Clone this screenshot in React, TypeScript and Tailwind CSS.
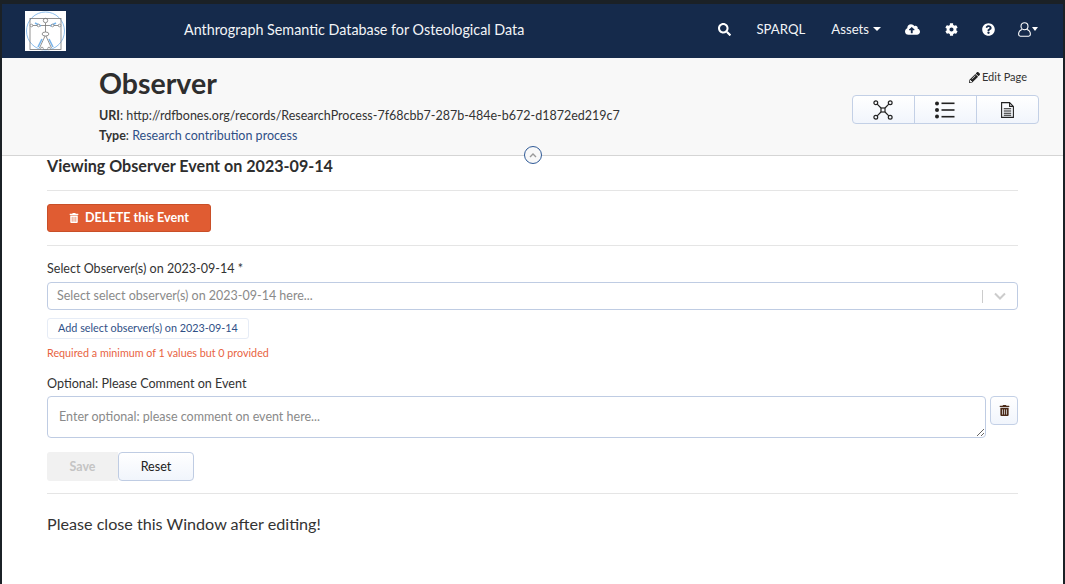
import { FaSearch, FaCloudUploadAlt, FaCog, FaQuestionCircle, FaPencilAlt, FaTrashAlt } from "react-icons/fa";

function Logo() {
  return (
    <div className="w-[41px] h-[40px] bg-white shrink-0">
      <svg viewBox="0 0 41 40" className="w-full h-full" fill="none">
        <circle cx="20.5" cy="20" r="19" stroke="#8fc0ee" strokeWidth="1" />
        <rect x="5" y="7.5" width="31" height="31" stroke="#777" strokeWidth="0.8" />
        <circle cx="20.5" cy="9.5" r="2.2" stroke="#777" strokeWidth="0.8" />
        <path d="M6 14.5h29M20.5 12v12M20.5 24l-6 13M20.5 24l6 13" stroke="#777" strokeWidth="0.8" />
        <path d="M10 12l6 3M31 12l-6 3M13 36l4-8M28 36l-4-8" stroke="#78b4ea" strokeWidth="1.6" />
        <ellipse cx="20.5" cy="23" rx="3.4" ry="2" fill="#fff" stroke="#777" strokeWidth="0.8" />
        <circle cx="6.5" cy="14.5" r="1.3" fill="#fff" stroke="#777" strokeWidth="0.7" />
        <circle cx="13.5" cy="14.5" r="1.3" fill="#fff" stroke="#777" strokeWidth="0.7" />
        <circle cx="27.5" cy="14.5" r="1.3" fill="#fff" stroke="#777" strokeWidth="0.7" />
        <circle cx="34.5" cy="14.5" r="1.3" fill="#fff" stroke="#777" strokeWidth="0.7" />
        <circle cx="17" cy="37.5" r="1.3" fill="#fff" stroke="#777" strokeWidth="0.7" />
        <circle cx="24" cy="37.5" r="1.3" fill="#fff" stroke="#777" strokeWidth="0.7" />
      </svg>
    </div>
  );
}

function GraphIcon() {
  return (
    <svg width="20" height="20" viewBox="0 0 20 20" fill="none" stroke="#222" strokeWidth="1.2">
      <rect x="8" y="8" width="4" height="4" />
      <circle cx="2.8" cy="2.8" r="1.9" />
      <circle cx="17.2" cy="2.8" r="1.9" />
      <circle cx="2.8" cy="17.2" r="1.9" />
      <circle cx="17.2" cy="17.2" r="1.9" />
      <path d="M4.2 4.2L8 8M15.8 4.2L12 8M4.2 15.8L8 12M15.8 15.8L12 12" />
    </svg>
  );
}

function ListIcon() {
  return (
    <svg width="20" height="18" viewBox="0 0 20 18" fill="#222">
      <circle cx="2" cy="2.5" r="2" />
      <circle cx="2" cy="9" r="2" />
      <circle cx="2" cy="15.5" r="2" />
      <rect x="6.5" y="1.5" width="13" height="1.6" />
      <rect x="6.5" y="8.2" width="13" height="1.6" />
      <rect x="6.5" y="14.9" width="13" height="1.6" />
    </svg>
  );
}

function DocIcon() {
  return (
    <svg width="13" height="16" viewBox="0 0 13 16" fill="none" stroke="#222" strokeWidth="1.1">
      <path d="M.6.6h8l3.8 3.8v11H.6zM8.6.6v3.8h3.8" />
      <path d="M2.8 6.8h7.4M2.8 9h7.4M2.8 11.2h7.4M2.8 13.2h7.4" />
    </svg>
  );
}

function UserIcon() {
  return (
    <svg width="13" height="15" viewBox="0 0 13 15" fill="none" stroke="#fff" strokeWidth="1.1">
      <circle cx="6.5" cy="4.2" r="3.5" />
      <path d="M4 7.5C1.8 8.3.6 10 .6 12.3c0 1.2.6 1.9 1.8 1.9h8.2c1.2 0 1.8-.7 1.8-1.9 0-2.3-1.2-4-3.4-4.8" />
    </svg>
  );
}

export default function App() {
  return (
    <div
      className="h-[584px] w-[1065px] overflow-hidden bg-[#1b2126] pt-[4px] pl-[2px] pr-[2px] text-[#333]"
      style={{ fontFamily: "Lato, sans-serif" }}
    >
      <div className="h-full bg-white">
        {/* navbar */}
        <nav className="h-[54px] bg-[#152a4b] flex items-center pl-[23px] text-white">
          <Logo />
          <span className="ml-[118px] mb-[3px] text-[14.33px] text-[#f2f4f7]">
            Anthrograph <span className="[font-feature-settings:'dlig']">Semantic</span> Database for Osteological Data
          </span>
          <div className="ml-auto mb-[3px] flex items-center text-[13.2px] pr-[25px] text-[#f2f4f7]">
            <FaSearch className="text-[13px] text-white" />
            <span className="ml-[25px]">SPARQL</span>
            <span className="ml-[26px] flex items-center gap-[4px]">
              Assets <span className="inline-block border-x-[4px] border-x-transparent border-t-[4px] border-t-white" />
            </span>
            <FaCloudUploadAlt className="ml-[24px] text-[15px] text-white" />
            <FaCog className="ml-[25px] text-[13px] text-white" />
            <FaQuestionCircle className="ml-[24px] text-[13px] text-white" />
            <span className="ml-[23px] flex items-center gap-px">
              <UserIcon />
              <span className="inline-block border-x-[3px] border-x-transparent border-t-[4px] border-t-white" />
            </span>
          </div>
        </nav>

        {/* page header */}
        <header className="relative h-[98px] bg-[#f8f8f8] border-b border-[#d5d5d5] pl-[97px] pr-[24px] flex justify-between">
          <div>
            <h1 className="mt-[6px] text-[28.5px] leading-[38px] font-bold text-[#2e2e2e]">Observer</h1>
            <p className="mt-[4px] text-[12.5px] leading-[20px]">
              <b>URI</b>: http://rdfbones.org/records/ResearchProcess-7f68cbb7-287b-484e-b672-d1872ed219c7
            </p>
            <p className="text-[12.5px] leading-[20px]">
              <b>Type</b>: <span className="text-[#2f4f86]">Research <span className="[font-feature-settings:'dlig']">contribution</span> process</span>
            </p>
          </div>
          <div className="flex flex-col items-end">
            <div className="mt-[11px] mr-[12px] flex items-center gap-[2px] text-[11px] leading-[16px]">
              <FaPencilAlt className="text-[11px] text-[#222]" /> Edit Page
            </div>
            <div className="mt-[10px] flex h-[29px] w-[187px] rounded-[4px] border border-[#c3d0e6] bg-gradient-to-b from-white to-[#f1f5fc]">
              <div className="w-[62px] flex items-center justify-center border-r border-[#c3d0e6] pr-[2px]">
                <GraphIcon />
              </div>
              <div className="w-[62px] flex items-center justify-center border-r border-[#c3d0e6] pr-px">
                <ListIcon />
              </div>
              <div className="flex-1 flex items-center justify-center">
                <DocIcon />
              </div>
            </div>
          </div>
          <div className="absolute left-[522px] top-[88px] w-[18px] h-[18px] rounded-full border border-[#2f5a97] bg-[#f8f8f8] flex items-center justify-center">
            <svg width="8" height="5" viewBox="0 0 8 5" fill="none" stroke="#999" strokeWidth="1.4">
              <path d="M1 4l3-3 3 3" />
            </svg>
          </div>
        </header>

        {/* form */}
        <main className="pl-[45px] pr-[45px]">
          <h2 className="text-[16.1px] leading-[20px] font-bold text-[#2e2e2e] pb-[14px] border-b border-[#e5e5e5]">
            Viewing Observer Event on 2023-09-14
          </h2>

          <div className="pt-[13px] pb-[13px] border-b border-[#e5e5e5]">
            <button className="h-[28px] w-[164px] rounded-[3px] bg-[#e05c32] border border-[#c94f28] text-white text-[12.6px] font-bold flex items-center justify-center gap-[6px]">
              <FaTrashAlt className="text-[10px]" /> DELETE this Event
            </button>
          </div>

          <label className="block mt-[14px] text-[12.55px] leading-[18px]">Select Observer(s) on 2023-09-14 *</label>
          <div className="mt-[4px] h-[28px] rounded-[4px] border border-[#bfcce3] flex items-center pl-[9px] text-[12.5px] text-[#8a8a8a]">
            <span>Select select observer(s) on 2023-09-14 here...</span>
            <span className="ml-auto h-[13px] w-px bg-[#ccc]" />
            <svg className="mx-[11px]" width="12" height="8" viewBox="0 0 12 8" fill="none" stroke="#ccc" strokeWidth="2">
              <path d="M1 1.5l5 5 5-5" />
            </svg>
          </div>

          <button className="mt-[8px] h-[21px] w-[202px] rounded-[3px] border border-[#e6ecf6] bg-white text-[10.8px] text-[#2f4f86] flex items-center justify-center">
            Add select observer(s) on 2023-09-14
          </button>
          <p className="mt-[6px] text-[10.75px] leading-[16px] text-[#e8633f]">Required a minimum of 1 values but 0 provided</p>

          <label className="block mt-[14px] text-[12.6px] leading-[18px] [font-feature-settings:'dlig']">Optional: Please Comment on Event</label>
          <div className="mt-[3px] flex items-start gap-[4px]">
            <textarea
              readOnly
              placeholder="Enter optional: please comment on event here..."
              className="flex-1 h-[42px] rounded-[4px] border border-[#bfcce3] px-[11px] py-[11px] text-[12.5px] leading-[18px] placeholder:text-[#8a8a8a] outline-none [font-feature-settings:'dlig']"
            />
            <button className="h-[29px] w-[28px] rounded-[4px] border border-[#c3d0e6] bg-gradient-to-b from-white to-[#f1f5fc] flex items-center justify-center">
              <FaTrashAlt className="text-[11px] text-[#4a2a18]" />
            </button>
          </div>

          <div className="mt-[14px] flex pb-[12px] border-b border-[#e5e5e5]">
            <button className="h-[29px] w-[71px] pt-px rounded-l-[3px] bg-[#f1f1f1] text-[12.4px] font-bold text-[#c4c4c4]">Save</button>
            <button className="h-[29px] w-[76px] pt-px rounded-[4px] border border-[#bfcce3] bg-gradient-to-b from-white to-[#f1f5fc] text-[12.6px] text-[#222]">Reset</button>
          </div>

          <p className="mt-[19px] text-[16.15px] leading-[22px] text-[#333] [font-feature-settings:'dlig']">Please close this Window after editing!</p>
        </main>
      </div>
    </div>
  );
}
